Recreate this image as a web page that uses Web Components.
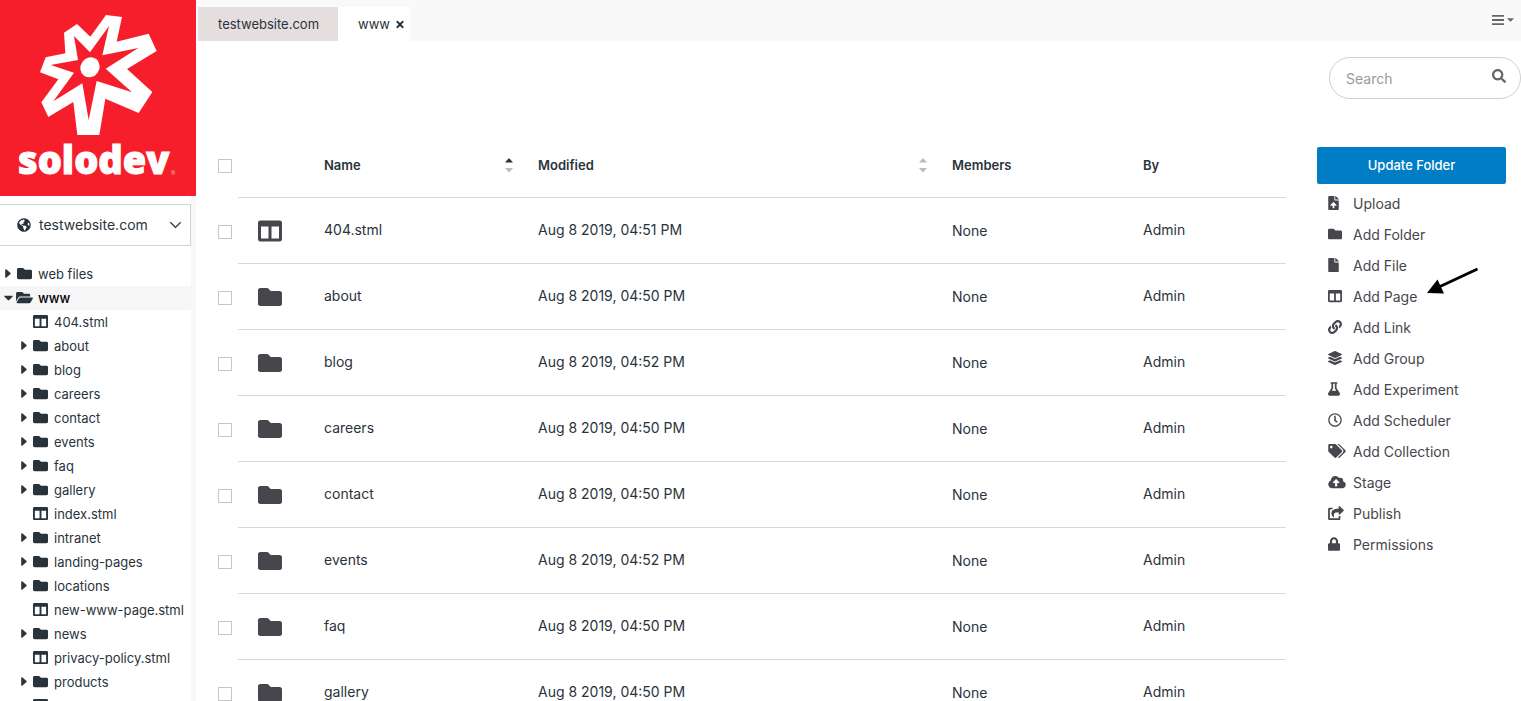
<!DOCTYPE html>
<html lang="en">
<head>
<meta charset="utf-8">
<title>Solodev – www</title>
<style>
  html, body { margin: 0; height: 100%; }
  body { font-family: Inter, "Liberation Sans", sans-serif; font-size: 14px; color: #2a333c; background: #fff; }
</style>
</head>
<body>
<sd-shell>
  <sd-sidebar slot="side"></sd-sidebar>
  <sd-tabs slot="top"></sd-tabs>
  <sd-search slot="search"></sd-search>
  <sd-files slot="content"></sd-files>
  <sd-actions slot="aside">
    <sd-action icon="upload">Upload</sd-action>
    <sd-action icon="folder">Add Folder</sd-action>
    <sd-action icon="file">Add File</sd-action>
    <sd-action icon="page" pointed>Add Page</sd-action>
    <sd-action icon="link">Add Link</sd-action>
    <sd-action icon="layers">Add Group</sd-action>
    <sd-action icon="flask">Add Experiment</sd-action>
    <sd-action icon="clock">Add Scheduler</sd-action>
    <sd-action icon="tags">Add Collection</sd-action>
    <sd-action icon="cloud">Stage</sd-action>
    <sd-action icon="share">Publish</sd-action>
    <sd-action icon="lock">Permissions</sd-action>
  </sd-actions>
</sd-shell>

<script>
const ICONS = {
  folder: [512, 'M464 128H272l-64-64H48C21.49 64 0 85.49 0 112v288c0 26.51 21.49 48 48 48h416c26.51 0 48-21.49 48-48V176c0-26.51-21.49-48-48-48z'],
  open: [576, 'M572.694 292.093L500.27 416.248A63.997 63.997 0 0 1 444.989 448H45.025c-18.523 0-30.064-20.093-20.731-36.093l72.424-124.155A64 64 0 0 1 152 256h399.964c18.523 0 30.064 20.093 20.73 36.093zM152 224h328v-48c0-26.51-21.49-48-48-48H272l-64-64H48C21.49 64 0 85.49 0 112v278.046l69.077-118.418C86.214 242.25 117.989 224 152 224z'],
  page: [512, 'M464 32H48C21.49 32 0 53.49 0 80v352c0 26.51 21.49 48 48 48h416c26.51 0 48-21.49 48-48V80c0-26.51-21.49-48-48-48zM224 416H64V160h160v256zm224 0H288V160h160v256z'],
  file: [384, 'M224 136V0H24C10.7 0 0 10.7 0 24v464c0 13.3 10.7 24 24 24h336c13.3 0 24-10.7 24-24V160H248c-13.2 0-24-10.8-24-24zm160-14.1v6.1H256V0h6.1c6.4 0 12.5 2.5 17 7l97.9 98c4.5 4.5 7 10.6 7 16.9z'],
  upload: [384, 'M224 136V0H24C10.7 0 0 10.7 0 24v464c0 13.3 10.7 24 24 24h336c13.3 0 24-10.7 24-24V160H248c-13.2 0-24-10.8-24-24zm65.18 216.01H224v80c0 8.84-7.16 16-16 16h-32c-8.84 0-16-7.16-16-16v-80H94.82c-14.28 0-21.41-17.29-11.27-27.36l96.42-95.7c6.65-6.61 17.39-6.61 24.04 0l96.42 95.7c10.15 10.07 3.03 27.36-11.25 27.36zM377 105L279.1 7c-4.5-4.5-10.6-7-17-7H256v128h128v-6.1c0-6.3-2.5-12.4-7-16.9z'],
  link: [512, 'M326.612 185.391c59.747 59.809 58.927 155.698.36 214.59-.11.12-.24.25-.36.37l-67.2 67.2c-59.27 59.27-155.699 59.262-214.96 0-59.27-59.26-59.27-155.7 0-214.96l37.106-37.106c9.84-9.84 26.786-3.3 27.294 10.606.648 17.722 3.826 35.527 9.69 52.721 1.986 5.822.567 12.262-3.783 16.612l-13.087 13.087c-28.026 28.026-28.905 73.66-1.155 101.96 28.024 28.579 74.086 28.749 102.325.51l67.2-67.19c28.191-28.191 28.073-73.757 0-101.83-3.701-3.694-7.429-6.564-10.341-8.569a16.037 16.037 0 0 1-6.947-12.606c-.396-10.567 3.348-21.456 11.698-29.806l21.054-21.055c5.521-5.521 14.182-6.199 20.584-1.731a152.482 152.482 0 0 1 20.522 17.197zM467.547 44.449c-59.261-59.262-155.69-59.27-214.96 0l-67.2 67.2c-.12.12-.25.25-.36.37-58.566 58.892-59.387 154.781.36 214.59a152.454 152.454 0 0 0 20.521 17.196c6.402 4.468 15.064 3.789 20.584-1.731l21.054-21.055c8.35-8.35 12.094-19.239 11.698-29.806a16.037 16.037 0 0 0-6.947-12.606c-2.912-2.005-6.64-4.875-10.341-8.569-28.073-28.073-28.191-73.639 0-101.83l67.2-67.19c28.239-28.239 74.3-28.069 102.325.51 27.75 28.3 26.872 73.934-1.155 101.96l-13.087 13.087c-4.35 4.35-5.769 10.79-3.783 16.612 5.864 17.194 9.042 34.999 9.69 52.721.509 13.906 17.454 20.446 27.294 10.606l37.106-37.106c59.271-59.259 59.271-155.699.001-214.959z'],
  layers: [512, 'M12.41 148.02l232.94 105.67c6.8 3.09 14.49 3.09 21.29 0l232.94-105.67c16.55-7.51 16.55-32.52 0-40.03L266.65 2.31a25.607 25.607 0 0 0-21.29 0L12.41 107.98c-16.55 7.51-16.55 32.53 0 40.04zm487.18 88.28l-58.09-26.33-161.64 73.27c-7.56 3.43-15.59 5.17-23.86 5.17s-16.29-1.74-23.86-5.17L70.51 209.97l-58.1 26.33c-16.55 7.5-16.55 32.5 0 40l232.94 105.59c6.8 3.08 14.49 3.08 21.29 0L499.59 276.3c16.55-7.5 16.55-32.5 0-40zm0 127.8l-57.87-26.23-161.86 73.37c-7.56 3.43-15.59 5.17-23.86 5.17s-16.29-1.74-23.86-5.17L70.29 337.87 12.41 364.1c-16.55 7.5-16.55 32.5 0 40l232.94 105.59c6.8 3.08 14.49 3.08 21.29 0L499.59 404.1c16.55-7.5 16.55-32.5 0-40z'],
  flask: [448, 'M437.2 403.5L320 215V64h8c13.3 0 24-10.7 24-24V24c0-13.3-10.7-24-24-24H120c-13.3 0-24 10.7-24 24v16c0 13.3 10.7 24 24 24h8v151L10.8 403.5C-18.5 450.6 15.3 512 70.9 512h306.2c55.7 0 89.4-61.5 60.1-108.5zM137.9 320l48.2-77.6c3.7-5.2 5.8-11.6 5.8-18.4V64h64v160c0 6.9 2.2 13.2 5.8 18.4l48.2 77.6h-172z'],
  clock: [512, 'M256 8C119 8 8 119 8 256s111 248 248 248 248-111 248-248S393 8 256 8zm0 448c-110.5 0-200-89.5-200-200S145.5 56 256 56s200 89.5 200 200-89.5 200-200 200zm61.8-104.4l-84.9-61.7c-3.1-2.3-4.9-5.9-4.9-9.7V116c0-6.6 5.4-12 12-12h32c6.6 0 12 5.4 12 12v141.7l66.8 48.6c5.4 3.9 6.5 11.4 2.6 16.8L334.6 349c-3.9 5.3-11.4 6.5-16.8 2.6z'],
  tags: [640, 'M497.941 225.941L286.059 14.059A48 48 0 0 0 252.118 0H48C21.49 0 0 21.49 0 48v204.118a48 48 0 0 0 14.059 33.941l211.882 211.882c18.744 18.745 49.136 18.746 67.882 0l204.118-204.118c18.745-18.745 18.745-49.137 0-67.882zM112 160c-26.51 0-48-21.49-48-48s21.49-48 48-48 48 21.49 48 48-21.49 48-48 48zm513.941 133.823L421.823 497.941c-18.745 18.745-49.137 18.745-67.882 0l-.36-.36L527.64 323.522c16.999-16.999 26.36-39.6 26.36-63.64s-9.362-46.641-26.36-63.64L331.397 0h48.721a48 48 0 0 1 33.941 14.059l211.882 211.882c18.745 18.745 18.745 49.137 0 67.882z'],
  cloud: [640, 'M537.6 226.6c4.1-10.7 6.4-22.4 6.4-34.6 0-53-43-96-96-96-19.7 0-38.1 6-53.3 16.2C367 64.2 315.3 32 256 32c-88.4 0-160 71.6-160 160 0 2.7.1 5.4.2 8.1C40.2 219.8 0 273.2 0 336c0 79.5 64.5 144 144 144h368c70.7 0 128-57.3 128-128 0-61.9-44-113.6-102.4-125.4zM393.4 288H328v112c0 8.8-7.2 16-16 16h-48c-8.8 0-16-7.2-16-16V288h-65.4c-14.3 0-21.4-17.2-11.3-27.3l105.4-105.4c6.2-6.2 16.4-6.2 22.6 0l105.4 105.4c10.1 10.1 2.9 27.3-11.3 27.3z'],
  share: [576, 'M568.482 177.448L424.479 313.433C409.3 327.768 384 317.14 384 295.985v-71.963c-144.575.97-205.566 35.113-164.775 171.353 4.483 14.973-12.846 26.567-25.006 17.33C155.252 383.105 120 326.488 120 269.339c0-143.937 117.599-172.5 264-173.312V24.012c0-21.174 25.317-31.768 40.479-17.448l144.003 135.988c10.02 9.463 10.028 25.425 0 34.896zM384 379.128V448H64V128h50.916a11.99 11.99 0 0 0 8.648-3.693c14.953-15.568 32.237-27.89 51.014-37.676C185.708 80.83 181.584 64 169.033 64H48C21.49 64 0 85.49 0 112v352c0 26.51 21.49 48 48 48h352c26.51 0 48-21.49 48-48v-88.806c0-8.288-8.197-14.066-16.011-11.302a71.83 71.83 0 0 1-34.189 3.377c-7.27-1.046-13.8 4.514-13.8 11.859z'],
  lock: [448, 'M400 224h-24v-72C376 68.2 307.8 0 224 0S72 68.2 72 152v72H48c-26.5 0-48 21.5-48 48v192c0 26.5 21.5 48 48 48h352c26.5 0 48-21.5 48-48V272c0-26.5-21.5-48-48-48zm-104 0H152v-72c0-39.7 32.3-72 72-72s72 32.3 72 72v72z'],
  search: [512, 'M505 442.7L405.3 343c-4.5-4.5-10.6-7-17-7H372c27.6-35.3 44-79.7 44-128C416 93.1 322.9 0 208 0S0 93.1 0 208s93.1 208 208 208c48.3 0 92.7-16.4 128-44v16.3c0 6.4 2.5 12.5 7 17l99.7 99.7c9.4 9.4 24.6 9.4 33.9 0l28.3-28.3c9.4-9.4 9.4-24.6.1-34zM208 336c-70.7 0-128-57.2-128-128 0-70.7 57.2-128 128-128 70.7 0 128 57.2 128 128 0 70.7-57.2 128-128 128z'],
  globe: [496, 'M248 8C111.03 8 0 119.03 0 256s111.03 248 248 248 248-111.03 248-248S384.97 8 248 8zm82.29 357.6c-3.9 3.88-7.99 7.95-11.31 11.28-2.99 3-5.1 6.7-6.17 10.71-1.51 5.66-2.73 11.38-4.77 16.87l-17.39 46.85c-13.76 3-28 4.69-42.65 4.69v-27.38c1.69-12.62-7.64-36.26-22.63-51.25-6-6-9.37-14.14-9.37-22.63v-32.01c0-11.64-6.27-22.34-16.46-27.97-14.37-7.95-34.81-19.06-48.81-26.11-11.48-5.78-22.1-13.14-31.65-21.75l-.8-.72a114.792 114.792 0 0 1-18.06-20.74c-9.38-13.77-24.66-36.42-34.59-51.14 20.47-45.5 57.36-82.04 103.2-101.89l24.01 12.01C203.48 89.74 216 82.01 216 70.11v-11.3c7.99-1.29 16.12-2.11 24.39-2.42l28.3 28.3c6.25 6.25 6.25 16.38 0 22.63L264 112l-10.34 10.34c-3.12 3.12-3.12 8.19 0 11.31l4.69 4.69c3.12 3.12 3.12 8.19 0 11.31l-8 8a8.008 8.008 0 0 1-5.66 2.34h-8.99c-2.08 0-4.08.81-5.58 2.27l-9.92 9.65a8.008 8.008 0 0 0-1.58 9.31l15.59 31.19c2.66 5.32-1.21 11.58-7.15 11.58h-5.64c-1.93 0-3.79-.7-5.24-1.96l-9.28-8.06a16.017 16.017 0 0 0-15.55-3.1l-31.17 10.39a11.95 11.95 0 0 0-8.17 11.34c0 4.53 2.56 8.66 6.61 10.69l11.08 5.54c9.41 4.71 19.79 7.16 30.31 7.16s22.59 27.29 32 32h66.75c8.49 0 16.62 3.37 22.63 9.37l13.69 13.69a30.503 30.503 0 0 1 8.93 21.57 46.536 46.536 0 0 1-13.72 32.98zM417 274.25c-5.79-1.45-10.84-5-14.15-9.97l-17.98-26.97a23.97 23.97 0 0 1 0-26.62l19.59-29.38c2.32-3.47 5.5-6.29 9.24-8.15l12.98-6.49C440.2 193.59 448 223.87 448 256c0 8.67-.74 17.16-1.82 25.54L417 274.25z'],
  right: [192, 'M0 384.7V127.3c0-17.8 21.5-26.7 34.1-14.1l148 128.7c7.8 7.8 7.8 20.5 0 28.3l-148 128.7C21.5 411.400 0 402.500 0 384.700z'],
  down: [320, 'M31.300 192h257.300c17.800 0 26.700 21.500 14.100 34.100L174.100 354.800c-7.800 7.800-20.500 7.800-28.300 0L17.200 226.100C4.600 213.500 13.500 192 31.300 192z'],
  times: [352, 'M242.720 256l100.070-100.070c12.280-12.280 12.280-32.190 0-44.480l-22.240-22.240c-12.280-12.280-32.190-12.280-44.480 0L176 189.280 75.930 89.210c-12.280-12.280-32.190-12.280-44.480 0L9.210 111.450c-12.280 12.280-12.280 32.190 0 44.480L109.280 256 9.210 356.070c-12.280 12.280-12.280 32.190 0 44.480l22.240 22.240c12.280 12.280 32.200 12.280 44.480 0L176 322.720l100.070 100.070c12.280 12.280 32.200 12.280 44.480 0l22.240-22.240c12.280-12.280 12.280-32.190 0-44.480L242.720 256z'],
  bars: [448, 'M0 66h448v66H0zM0 223h448v66H0zM0 380h448v66H0z'],
  chevron: [512, 'M70 150l186 186 186-186 34 34-220 220L36 184z']
};

function define(name, html, init) {
  const template = document.createElement('template');
  template.innerHTML = html;
  customElements.define(name, class extends HTMLElement {
    connectedCallback() {
      if (this.shadowRoot) return;
      this.attachShadow({ mode: 'open' }).append(template.content.cloneNode(true));
      if (init) init(this, this.shadowRoot);
    }
  });
}

// An icon is as tall as its size attribute; its width follows the glyph.
define('sd-icon', `
  <style>:host { display: inline-flex; flex: none; } svg { display: block; fill: currentColor; }</style>
  <svg aria-hidden="true"><path/></svg>`,
  (host, root) => {
    const [w, d] = ICONS[host.getAttribute('name')];
    const size = Number(host.getAttribute('size') || 14);
    const svg = root.querySelector('svg');
    svg.setAttribute('viewBox', `0 0 ${w} 512`);
    svg.setAttribute('height', size);
    svg.setAttribute('width', Math.round(w / 512 * size));
    root.querySelector('path').setAttribute('d', d);
  });

define('sd-shell', `
  <style>
    :host { display: grid; grid-template-columns: 196px minmax(0, 1fr); height: 100vh; overflow: hidden; }
    .main { display: flex; flex-direction: column; min-width: 0; min-height: 0; }
    .search { display: flex; justify-content: flex-end; padding: 16px 0 33px; }
    .body { display: flex; gap: 31px; padding: 0 15px 0 22px; align-items: flex-start; }
    .files { flex: 1; min-width: 0; }
    aside { flex: none; width: 189px; padding-top: 15px; }
  </style>
  <slot name="side"></slot>
  <div class="main">
    <slot name="top"></slot>
    <div class="search"><slot name="search"></slot></div>
    <div class="body">
      <main class="files"><slot name="content"></slot></main>
      <aside><slot name="aside"></slot></aside>
    </div>
  </div>`);

define('sd-logo', `
  <style>
    :host { display: block; background: #f71e2b; color: #fff; }
    svg { display: block; width: 100%; fill: currentColor; }
    text { font-family: "Open Sans", Inter, sans-serif; font-weight: 800; font-size: 38px; stroke: currentColor; stroke-width: 1px; }
    .mark { font-size: 5px; font-weight: 400; opacity: .7; stroke: none; }
  </style>
  <svg viewBox="0 0 196 196" role="img" aria-label="solodev">
    <g transform="scale(.33333)">
      <path fill-rule="evenodd" d="M318 45L366 51L350 125L446 101L470 153L381 207L457 276L416 339L316 296L298 405H232L220 306L145 351L124 307L175 238L120 217L137 172L196 160L192 98L231 72L271 110ZM327 78L270 157L222 108L234 180L152 195L222 218L160 304L247 250L266 360L290 243L396 277L317 206L415 144L307 166Z"/>
      <ellipse cx="270" cy="202" rx="28" ry="31" transform="rotate(35 270 202)"/>
    </g>
    <text x="18" y="174">solodev</text>
    <text class="mark" x="171" y="175">®</text>
  </svg>`);

define('sd-tree-item', `
  <style>
    :host { display: block; }
    a { display: flex; align-items: center; height: 24px; padding-left: 5px; font-size: 13px; color: #2a333c; text-decoration: none; white-space: nowrap; }
    :host([nested]) a { padding-left: 21px; }
    :host([active]) a { background: #f6f6f6; padding-left: 4px; }
    :host([active]) .icon { width: 22px; }
    :host([active]) .label { color: #000; font-weight: 500; }
    .caret { display: flex; width: 12px; flex: none; }
    .icon { display: flex; width: 21px; flex: none; }
    .caret, .icon { padding-bottom: 1px; }
  </style>
  <a href="#"><span class="caret"></span><span class="icon"></span><span class="label"><slot></slot></span></a>`,
  (host, root) => {
    const kind = host.getAttribute('kind');
    const caret = { folder: 'right', open: 'down' }[kind];
    if (caret) root.querySelector('.caret').innerHTML = `<sd-icon name="${caret}" size="15"></sd-icon>`;
    root.querySelector('.icon').innerHTML = `<sd-icon name="${kind}" size="15"></sd-icon>`;
  });

const TREE = ['404.stml', 'about', 'blog', 'careers', 'contact', 'events', 'faq', 'gallery', 'index.stml', 'intranet',
  'landing-pages', 'locations', 'new-www-page.stml', 'news', 'privacy-policy.stml', 'products'];

define('sd-sidebar', `
  <style>
    :host { display: flex; flex-direction: column; min-height: 0; }
    .panel { flex: 1; min-height: 0; overflow: hidden; border-right: 5px solid #f7f7f7; padding-top: 8px; }
    .site { position: relative; display: block; }
    .site sd-icon { position: absolute; top: 14px; pointer-events: none; }
    .globe { left: 17px; }
    .chevron { right: 9px; }
    select { appearance: none; display: block; width: 100%; height: 42px; padding: 0 30px 2px 39px; margin: 0; border: 1px solid #d3d3d3; border-left: 0; border-radius: 0; background: #fff; font: inherit; font-size: 14px; color: inherit; }
    nav { padding-top: 16px; }
  </style>
  <sd-logo></sd-logo>
  <div class="panel">
    <label class="site">
      <sd-icon class="globe" name="globe" size="14"></sd-icon>
      <select aria-label="Website"><option>testwebsite.com</option></select>
      <sd-icon class="chevron" name="chevron" size="13"></sd-icon>
    </label>
    <nav aria-label="Files">
      <sd-tree-item kind="folder">web files</sd-tree-item>
      <sd-tree-item kind="open" active>www</sd-tree-item>
      ${TREE.map(n => `<sd-tree-item nested kind="${n.endsWith('.stml') ? 'page' : 'folder'}">${n}</sd-tree-item>`).join('')}
      <sd-tree-item nested kind="page"></sd-tree-item>
    </nav>
  </div>`);

define('sd-tabs', `
  <style>
    :host { display: flex; justify-content: space-between; align-items: flex-end; height: 41px; padding: 0 7px 0 2px; background: #f9f9f9; }
    .tabs { display: flex; }
    .tab { display: flex; align-items: center; gap: 6px; height: 34px; padding: 0 19px 0 20px; background: #e5dedf; font-size: 13px; }
    .tab.current { background: #fff; padding-right: 6px; }
    a { color: inherit; text-decoration: none; }
    button { display: flex; align-items: center; border: 0; padding: 0; background: none; color: inherit; }
    .menu { gap: 3px; height: 41px; padding-bottom: 2px; color: #666; }
  </style>
  <div class="tabs">
    <div class="tab"><a href="#">testwebsite.com</a></div>
    <div class="tab current"><a href="#">www</a><button aria-label="Close tab"><sd-icon name="times" size="11"></sd-icon></button></div>
  </div>
  <button class="menu" aria-label="Menu"><sd-icon name="bars" size="14"></sd-icon><sd-icon name="down" size="11"></sd-icon></button>`);

define('sd-search', `
  <style>
    :host { display: block; position: relative; }
    input { display: block; box-sizing: border-box; width: 192px; height: 42px; border: 1px solid #d0d0d0; border-radius: 21px; padding: 0 40px 0 16px; font: inherit; font-size: 14px; color: inherit; background: #fff; outline: 0; }
    input::placeholder { color: #999; opacity: 1; }
    button { position: absolute; right: 15px; top: 12px; border: 0; padding: 0; background: none; color: #666; display: flex; }
  </style>
  <input type="search" placeholder="Search" aria-label="Search">
  <button aria-label="Run search"><sd-icon name="search" size="14"></sd-icon></button>`);

const FILES = [['404.stml', '51'], ['about', '50'], ['blog', '52'], ['careers', '50'], ['contact', '50'], ['events', '52'], ['faq', '50'], ['gallery', '50']];

define('sd-sort', `
  <style>
    :host { display: block; color: #bbb; }
    svg { display: block; fill: currentColor; }
    :host([asc]) .up { fill: #2a333c; }
  </style>
  <svg width="8" height="14" viewBox="0 0 8 14" aria-hidden="true"><path class="up" d="M0 4.500L3.500 0.500h1L8 4.500z"/><path d="M0 10L8 10L4.500 14h-1z"/></svg>`);

define('sd-files', `
  <style>
    :host { display: block; }
    table { width: 100%; table-layout: fixed; border-collapse: separate; border-spacing: 0; }
    th, td { box-sizing: border-box; height: 66px; padding: 0 0 0 20px; border-bottom: 1px solid #d9d9d9; text-align: left; font-weight: 400; vertical-align: middle; white-space: nowrap; }
    thead th { font-size: 13px; font-weight: 600; }
    .text { padding-bottom: 2px; }
    .check { padding: 1px 0 0; border: 0; }
    .c-check { width: 20px; } .c-icon { width: 66px; } .c-name { width: 214px; } .c-members { width: 191px; } .c-by { width: 163px; }
    input { appearance: none; display: block; box-sizing: border-box; width: 14px; height: 14px; margin: 0; border: 1px solid #c6c6c6; background: #fff; }
    .icon sd-icon { display: flex; color: #47464c; }
    .sort { display: flex; align-items: center; justify-content: space-between; padding-right: 5px; }
  </style>
  <table>
    <colgroup><col class="c-check"><col class="c-icon"><col class="c-name"><col><col class="c-members"><col class="c-by"></colgroup>
    <thead><tr>
      <td class="check"><input type="checkbox" aria-label="Select all"></td><td></td>
      <th scope="col" aria-sort="ascending"><div class="sort">Name<sd-sort asc></sd-sort></div></th>
      <th scope="col"><div class="sort">Modified<sd-sort></sd-sort></div></th>
      <th scope="col">Members</th><th scope="col">By</th>
    </tr></thead>
    <tbody>${FILES.map(([n, m]) => `<tr>
      <td class="check"><input type="checkbox" aria-label="Select ${n}"></td>
      <td class="icon"><sd-icon name="${n.endsWith('.stml') ? 'page' : 'folder'}" size="24"></sd-icon></td>
      <td class="text">${n}</td><td class="text">Aug 8 2019, 04:${m} PM</td><td>None</td><td class="text">Admin</td></tr>`).join('')}
    </tbody>
  </table>`);

define('sd-action', `
  <style>
    :host { display: block; position: relative; }
    a { display: flex; align-items: center; height: 31px; padding-left: 11px; color: #47464c; text-decoration: none; white-space: nowrap; }
    .icon { width: 25px; flex: none; display: flex; padding-bottom: 2px; }
    .arrow { display: none; position: absolute; left: 109px; top: -15px; }
    :host([pointed]) .arrow { display: block; }
  </style>
  <a href="#"><span class="icon"></span><span><slot></slot></span></a>
  <svg class="arrow" width="54" height="30" viewBox="0 0 54 30" aria-hidden="true"><path d="M51.500 3L14 20.500" stroke="#000" stroke-width="3"/><path d="M1 27L11.500 13.500L18 27.500z"/></svg>`,
  (host, root) => {
    root.querySelector('.icon').innerHTML = `<sd-icon name="${host.getAttribute('icon')}" size="14"></sd-icon>`;
  });

define('sd-actions', `
  <style>
    :host { display: block; }
    button { display: block; width: 100%; height: 37px; margin: 0 0 4px; padding: 0 0 2px; border: 0; border-radius: 2px; background: #017dc5; color: #fff; font: inherit; font-size: 13px; font-weight: 500; }
  </style>
  <button type="button">Update Folder</button>
  <slot></slot>`);
</script>
</body>
</html>
